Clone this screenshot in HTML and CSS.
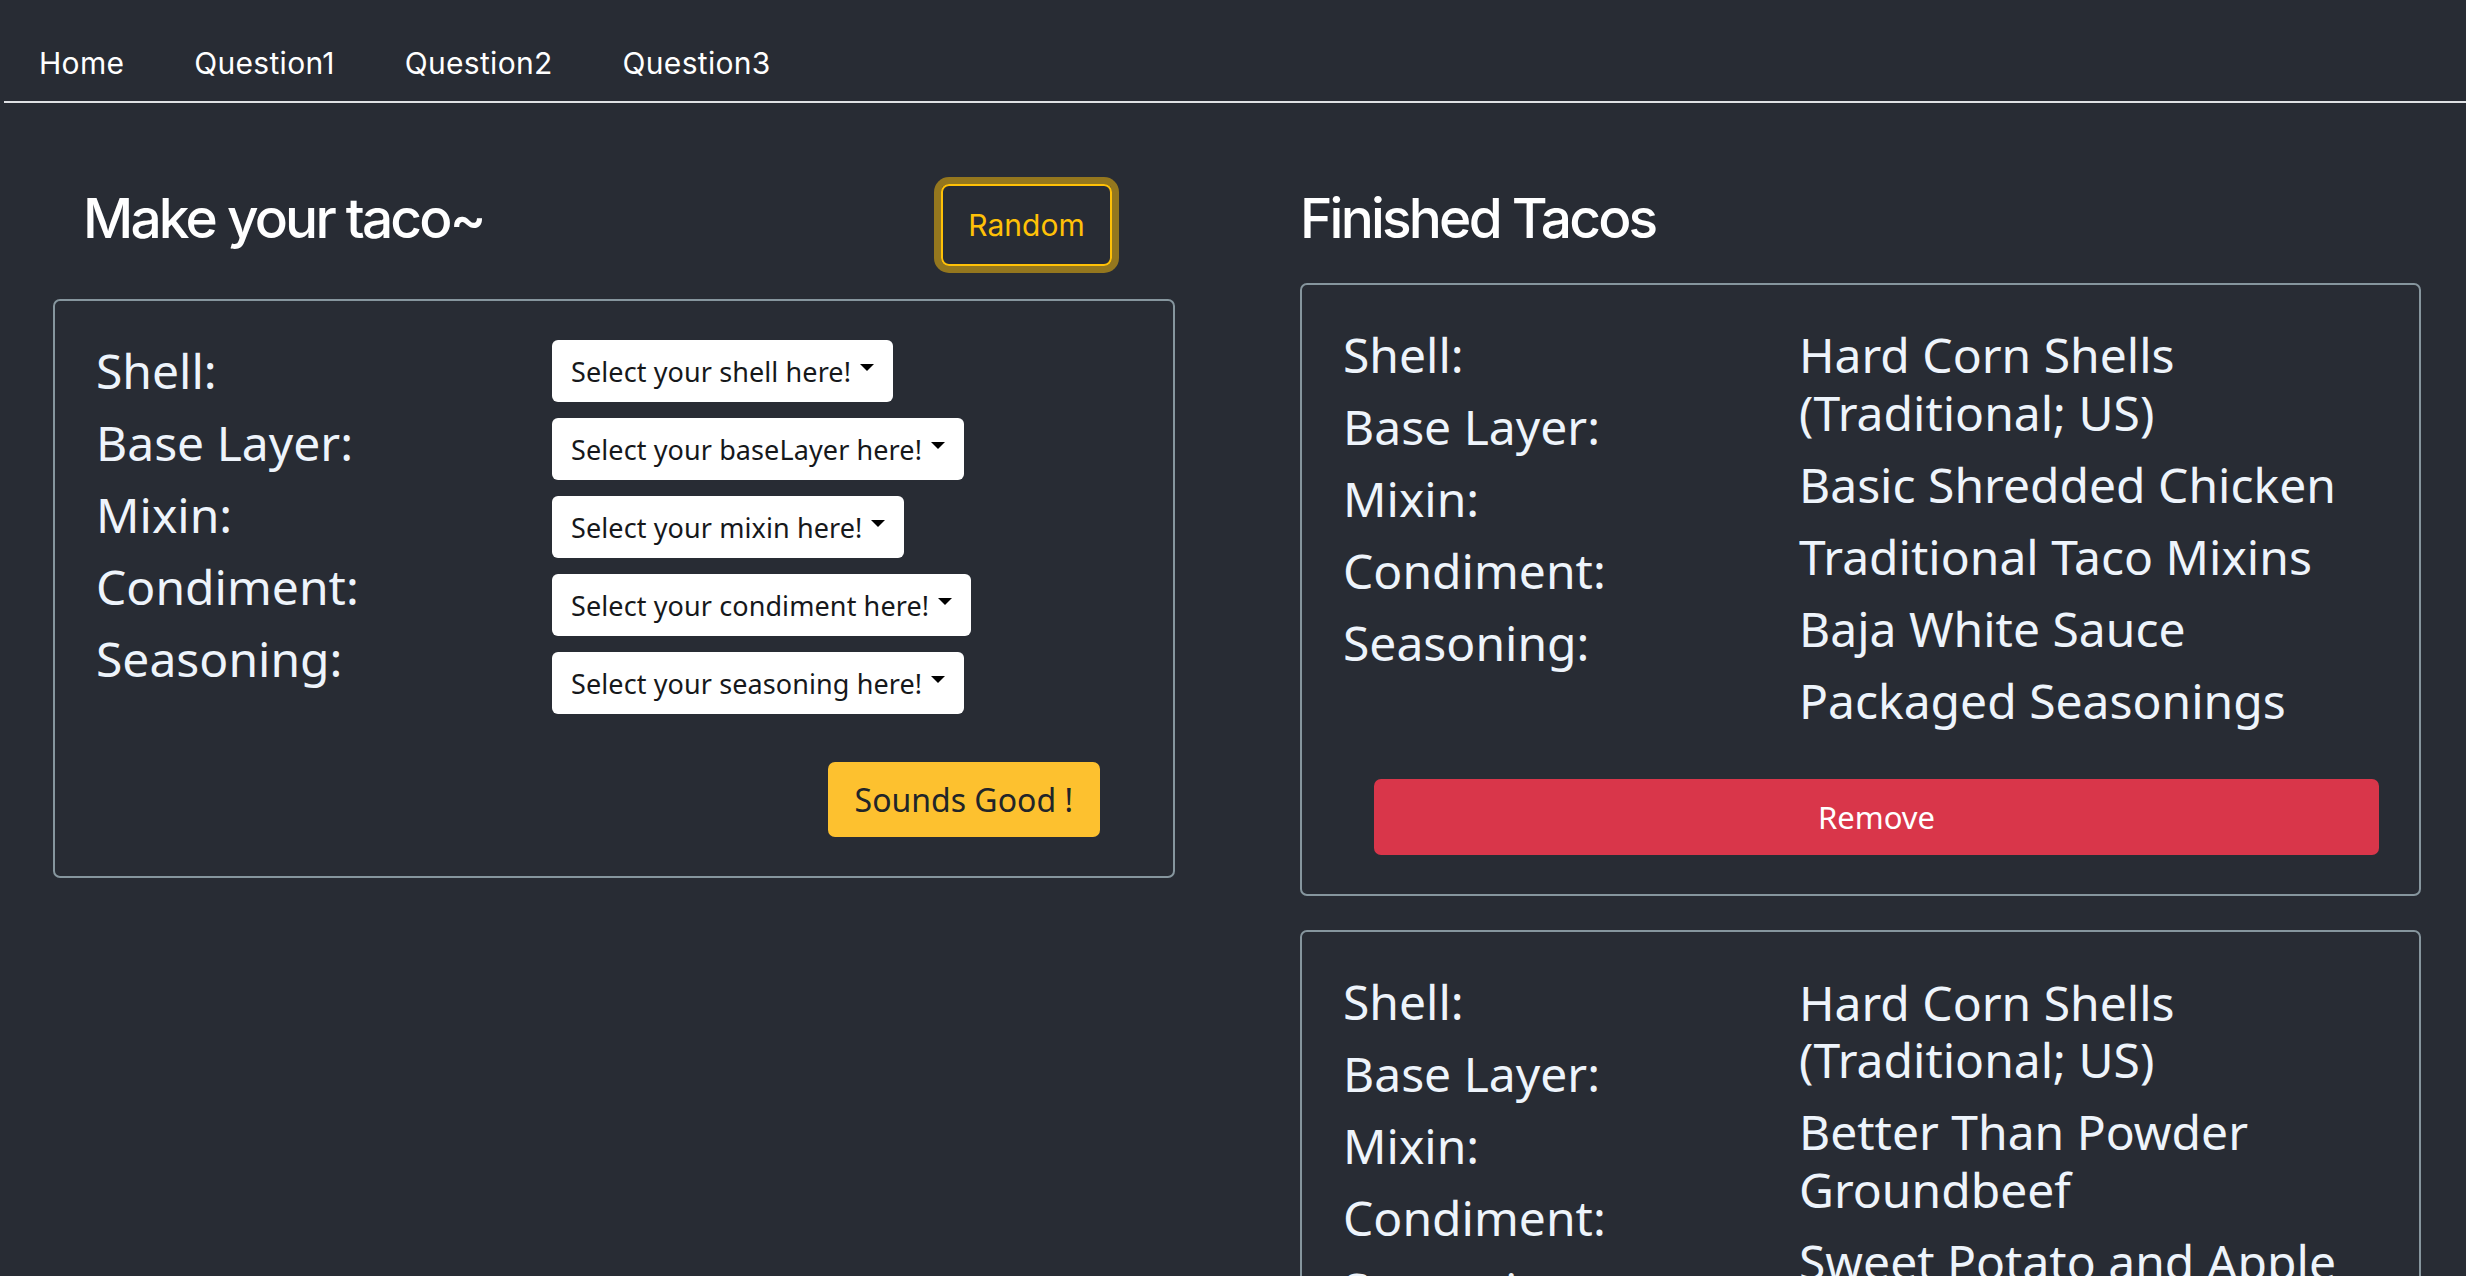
FILE: index.html
```html
<!DOCTYPE html>
<html lang="en">
<head>
<meta charset="utf-8">
<title>Taco Builder</title>
<link rel="stylesheet" href="styles.css">
</head>
<body>
  <nav class="topnav">
    <a class="nav-link" href="#">Home</a>
    <a class="nav-link" href="#">Question1</a>
    <a class="nav-link" href="#">Question2</a>
    <a class="nav-link" href="#">Question3</a>
  </nav>

  <main class="layout">
    <section class="col-left">
      <div class="left-header">
        <h2 class="title">Make your taco~</h2>
        <button class="btn-random">Random</button>
      </div>
      <div class="card form-card">
        <div class="card-grid">
          <div class="labels">
            <div class="label">Shell:</div>
            <div class="label">Base Layer:</div>
            <div class="label">Mixin:</div>
            <div class="label">Condiment:</div>
            <div class="label">Seasoning:</div>
          </div>
          <div class="dropdowns">
            <button class="dropdown">Select your shell here!<span class="caret"></span></button>
            <button class="dropdown">Select your baseLayer here!<span class="caret"></span></button>
            <button class="dropdown">Select your mixin here!<span class="caret"></span></button>
            <button class="dropdown">Select your condiment here!<span class="caret"></span></button>
            <button class="dropdown">Select your seasoning here!<span class="caret"></span></button>
          </div>
        </div>
        <div class="submit-row">
          <button class="btn-good">Sounds Good !</button>
        </div>
      </div>
    </section>

    <section class="col-right">
      <h2 class="title right-title">Finished Tacos</h2>

      <div class="card taco-card">
        <div class="card-grid">
          <div class="labels">
            <div class="label">Shell:</div>
            <div class="label">Base Layer:</div>
            <div class="label">Mixin:</div>
            <div class="label">Condiment:</div>
            <div class="label">Seasoning:</div>
          </div>
          <div class="values">
            <div class="value">Hard Corn Shells (Traditional; US)</div>
            <div class="value">Basic Shredded Chicken</div>
            <div class="value">Traditional Taco Mixins</div>
            <div class="value">Baja White Sauce</div>
            <div class="value">Packaged Seasonings</div>
          </div>
        </div>
        <button class="btn-remove">Remove</button>
      </div>

      <div class="card taco-card">
        <div class="card-grid">
          <div class="labels">
            <div class="label">Shell:</div>
            <div class="label">Base Layer:</div>
            <div class="label">Mixin:</div>
            <div class="label">Condiment:</div>
            <div class="label">Seasoning:</div>
          </div>
          <div class="values">
            <div class="value">Hard Corn Shells (Traditional; US)</div>
            <div class="value">Better Than Powder Groundbeef</div>
            <div class="value">Sweet Potato and Apple Slaw</div>
            <div class="value">Baja White Sauce</div>
            <div class="value">Packaged Seasonings</div>
          </div>
        </div>
        <button class="btn-remove">Remove</button>
      </div>
    </section>
  </main>
</body>
</html>
```

FILE: styles.css
```css
html {
  overflow: hidden;
}

body {
  margin: 0;
  background: #282c34;
  color: #eef4fb;
  font-family: "Noto Sans", "Liberation Sans", sans-serif;
}

/* ---------- top navigation ---------- */
.topnav {
  display: flex;
  margin-left: 4px;
  padding: 41px 0 15px 0;
  border-bottom: 2px solid #dfe1e4;
}

.nav-link {
  font-family: Inter, "Liberation Sans", sans-serif;
  font-size: 30px;
  line-height: 45px;
  letter-spacing: 0.3px;
  color: #ffffff;
  text-decoration: none;
  padding: 0 35px;
}

/* ---------- page columns ---------- */
.layout {
  display: grid;
  grid-template-columns: 1122px 1121px;
  column-gap: 125px;
  padding-left: 53px;
}

.title {
  margin: 0;
  font-family: Inter, "Liberation Sans", sans-serif;
  font-weight: 500;
  font-size: 55px;
  line-height: 66px;
  letter-spacing: -2.8px;
  color: #ffffff;
}

.left-header {
  display: flex;
  justify-content: space-between;
  align-items: flex-start;
  padding: 81px 63px 0 30px;
  margin-bottom: 33px;
}

.left-header .title {
  margin-top: 1px;
}

.right-title {
  margin-top: 82px;
  margin-bottom: 32px;
}

.btn-random {
  font-family: Inter, "Liberation Sans", sans-serif;
  font-size: 30px;
  color: #ffc107;
  background: transparent;
  border: 2px solid #ffc107;
  border-radius: 8px;
  width: 171px;
  height: 82px;
  padding: 0;
  box-shadow: 0 0 0 7px rgba(255, 193, 7, 0.5);
}

/* ---------- cards ---------- */
.card {
  border: 2px solid #86969e;
  border-radius: 7px;
  padding: 34px 41px 39px 41px;
  margin-bottom: 34px;
}

.card-grid {
  display: grid;
  grid-template-columns: 456px 1fr;
}

.label {
  font-size: 48px;
  line-height: 72px;
  white-space: nowrap;
}

.value {
  font-size: 48px;
  line-height: 57.6px;
  padding: 7.2px 0;
}

/* ---------- form dropdowns ---------- */
.dropdowns {
  display: flex;
  flex-direction: column;
  align-items: flex-start;
  gap: 16px;
  padding-top: 5px;
}

.dropdown {
  display: flex;
  align-items: center;
  height: 62px;
  padding: 0 19px;
  border: 0;
  border-radius: 6px;
  background: #ffffff;
  color: #16181b;
  font-family: "Noto Sans", "Liberation Sans", sans-serif;
  font-size: 27px;
  letter-spacing: 0.1px;
}

.caret {
  width: 0;
  height: 0;
  margin-left: 9px;
  margin-top: -7px;
  border-top: 7px solid #000000;
  border-left: 7px solid transparent;
  border-right: 7px solid transparent;
}

.submit-row {
  display: flex;
  justify-content: flex-end;
  padding-right: 32px;
  margin-top: 48px;
}

.btn-good {
  height: 75px;
  padding: 0 27px;
  border: 0;
  border-radius: 7px;
  background: #fdc12f;
  color: #212529;
  font-family: "Noto Sans", "Liberation Sans", sans-serif;
  font-size: 32px;
}

/* ---------- finished taco cards ---------- */
.btn-remove {
  display: block;
  width: calc(100% - 30px);
  height: 76px;
  margin: 43px 0 0 31px;
  border: 0;
  border-radius: 7px;
  background: #d9364a;
  color: #ffffff;
  font-family: "Noto Sans", "Liberation Sans", sans-serif;
  font-size: 31px;
}
```
